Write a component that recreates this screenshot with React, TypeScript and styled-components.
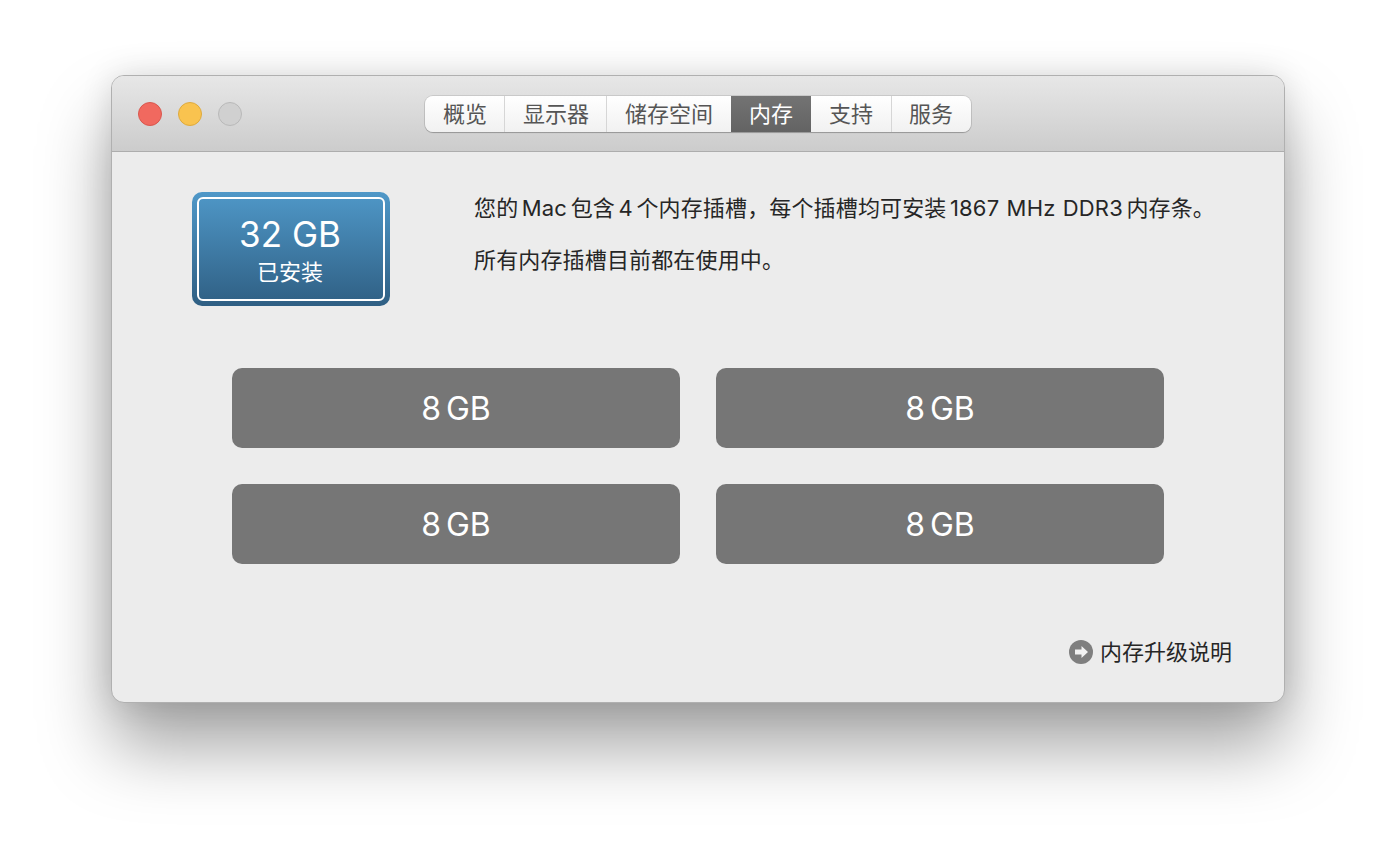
import styled, { createGlobalStyle } from 'styled-components';

const GlobalStyle = createGlobalStyle`
  html, body {
    margin: 0;
    padding: 0;
    background: #fff;
    overflow: hidden;
  }
  body {
    font-family: Inter, "Noto Sans CJK SC", sans-serif;
  }
`;

const Page = styled.div`
  width: 1396px;
  height: 850px;
  padding-top: 75px;
  box-sizing: border-box;
  display: flex;
  justify-content: center;
  align-items: flex-start;
`;

const Window = styled.div`
  width: 1174px;
  height: 628px;
  box-sizing: border-box;
  border-radius: 13px;
  border: 1px solid #b0b0b0;
  background: #ececec;
  overflow: hidden;
  display: flex;
  flex-direction: column;
  box-shadow: 0 44px 70px rgba(0, 0, 0, 0.36), 0 0 32px rgba(0, 0, 0, 0.12);
`;

const TitleBar = styled.header`
  height: 76px;
  flex: none;
  box-sizing: border-box;
  border-bottom: 1px solid #adadad;
  background: linear-gradient(#e7e7e7, #cccccc);
  display: grid;
  grid-template-columns: 1fr auto 1fr;
  align-items: center;
  padding: 0 26px;
`;

const Lights = styled.div`
  display: flex;
  gap: 16px;
`;

const Light = styled.span<{ $fill: string; $edge: string }>`
  width: 24px;
  height: 24px;
  box-sizing: border-box;
  border-radius: 50%;
  background: ${(p) => p.$fill};
  border: 1px solid ${(p) => p.$edge};
`;

const Tabs = styled.nav`
  display: flex;
  height: 36px;
  box-sizing: border-box;
  border-radius: 8px;
  background: linear-gradient(#ffffff, #f1f1f1);
  box-shadow: 0 0 0 1px rgba(0, 0, 0, 0.1), 0 1px 1px rgba(0, 0, 0, 0.2);
  overflow: hidden;
`;

const Tab = styled.div<{ $active?: boolean; $divider?: boolean }>`
  padding: 0 17.5px;
  font-size: 22px;
  line-height: 36px;
  color: ${(p) => (p.$active ? '#fff' : '#555')};
  background: ${(p) => (p.$active ? 'linear-gradient(#737373, #636363)' : 'none')};
  border-left: 1px solid ${(p) => (p.$divider ? '#d6d6d6' : 'transparent')};
  &:first-child {
    border-left: 0;
  }
`;

const Content = styled.main`
  flex: 1;
  display: flex;
  flex-direction: column;
  padding: 40px 52px 0 80px;
`;

const Summary = styled.section`
  display: flex;
  gap: 84px;
`;

const Badge = styled.div`
  width: 198px;
  height: 114px;
  flex: none;
  box-sizing: border-box;
  padding: 5px;
  border-radius: 10px;
  background: linear-gradient(#4f98c8, #2f5f83);
`;

const BadgeInner = styled.div`
  height: 100%;
  box-sizing: border-box;
  border: 2px solid #fff;
  border-radius: 6px;
  color: #fff;
  display: flex;
  flex-direction: column;
  align-items: center;
  padding: 13px 2px 0 0;
`;

const BadgeSize = styled.div`
  font-size: 35px;
  line-height: 44px;
`;

const BadgeLabel = styled.div`
  font-size: 22px;
  line-height: 30px;
  margin-top: 1px;
`;

const Notes = styled.div`
  color: #262626;
  font-size: 22px;
`;

const Note = styled.p`
  margin: 0 0 20px;
  line-height: 32px;
  letter-spacing: 0.15px;
  white-space: nowrap;
`;

const Gap = styled.span`
  font-size: 12px;
  line-height: 0;
`;

const Spec = styled.span`
  word-spacing: 1px;
`;

const Slots = styled.section`
  display: grid;
  grid-template-columns: 448px 448px;
  grid-auto-rows: 80px;
  gap: 36px;
  margin: 62px 0 0 40px;
`;

const Slot = styled.div`
  border-radius: 10px;
  background: #767676;
  color: #fff;
  font-size: 32px;
  display: flex;
  align-items: center;
  justify-content: center;
  gap: 5px;
`;

const HelpLink = styled.a`
  display: flex;
  align-items: center;
  justify-content: flex-end;
  gap: 7px;
  margin-top: 70px;
  color: #262626;
  font-size: 22px;
  line-height: 36px;
`;

const ArrowIcon = () => (
  <svg width="24" height="24" viewBox="0 0 24 24" aria-hidden="true">
    <circle cx="12" cy="12" r="12" fill="#7f7f7f" />
    <path d="M6 9.5h6.5V6l6.5 6-6.5 6v-3.5H6z" fill="#f2f2f2" />
  </svg>
);

const slots = ['slot-1', 'slot-2', 'slot-3', 'slot-4'];

const App = () => (
  <>
    <GlobalStyle />
    <Page>
      <Window>
        <TitleBar>
          <Lights>
            <Light $fill="#f1695f" $edge="#d9574e" />
            <Light $fill="#f9c34f" $edge="#deaa3e" />
            <Light $fill="#d0d0d0" $edge="#b9b9b9" />
          </Lights>
          <Tabs>
            <Tab>概览</Tab>
            <Tab $divider>显示器</Tab>
            <Tab $divider>储存空间</Tab>
            <Tab $active>内存</Tab>
            <Tab>支持</Tab>
            <Tab $divider>服务</Tab>
          </Tabs>
        </TitleBar>
        <Content>
          <Summary>
            <Badge>
              <BadgeInner>
                <BadgeSize>32 GB</BadgeSize>
                <BadgeLabel>已安装</BadgeLabel>
              </BadgeInner>
            </Badge>
            <Notes>
              <Note>
                您的<Gap> </Gap>Mac<Gap> </Gap>包含<Gap> </Gap>4<Gap> </Gap>个内存插槽，每个插槽均可安装<Gap> </Gap><Spec>1867 MHz DDR3</Spec><Gap> </Gap>内存条。
              </Note>
              <Note>所有内存插槽目前都在使用中。</Note>
            </Notes>
          </Summary>
          <Slots>
            {slots.map((id) => (
              <Slot key={id}>
                <span>8</span>
                <span>GB</span>
              </Slot>
            ))}
          </Slots>
          <HelpLink>
            <ArrowIcon />
            内存升级说明
          </HelpLink>
        </Content>
      </Window>
    </Page>
  </>
);

export default App;
